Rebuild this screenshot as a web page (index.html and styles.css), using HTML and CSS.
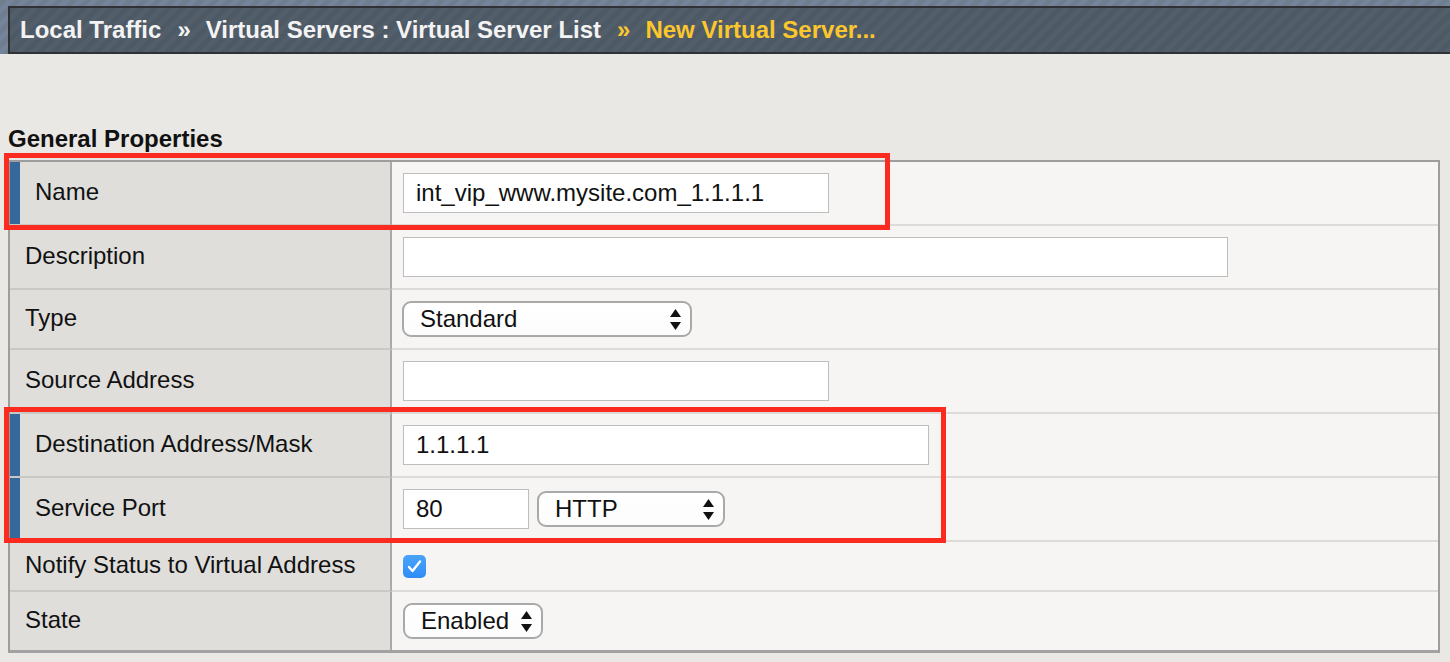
FILE: index.html
```html
<!DOCTYPE html>
<html lang="en">
<head>
<meta charset="utf-8">
<title>New Virtual Server</title>
<link rel="stylesheet" href="styles.css">
</head>
<body>
<header class="topbar">
  <div class="crumbs">
    <span class="crumb">Local Traffic</span><span class="sep">»</span><span class="crumb">Virtual Servers : Virtual Server List</span><span class="sep current">»</span><span class="crumb current">New Virtual Server...</span>
  </div>
</header>
<main class="content">
  <h2 class="section-title">General Properties</h2>
  <div class="props">
    <div class="row req">
      <div class="label">Name</div>
      <div class="value"><div class="input w-name">int_vip_www.mysite.com_1.1.1.1</div></div>
    </div>
    <div class="row">
      <div class="label">Description</div>
      <div class="value"><div class="input w-desc"></div></div>
    </div>
    <div class="row">
      <div class="label">Type</div>
      <div class="value">
        <div class="select w-type"><span>Standard</span><svg class="arrows" width="11" height="21" viewBox="0 0 11 21"><path d="M5.5 0 L11 8 L0 8 Z M0 13 L11 13 L5.5 21 Z"/></svg></div>
      </div>
    </div>
    <div class="row">
      <div class="label">Source Address</div>
      <div class="value"><div class="input w-name"></div></div>
    </div>
    <div class="row req">
      <div class="label">Destination Address/Mask</div>
      <div class="value"><div class="input w-dest">1.1.1.1</div></div>
    </div>
    <div class="row req">
      <div class="label">Service Port</div>
      <div class="value">
        <div class="input w-port">80</div>
        <div class="select w-http"><span>HTTP</span><svg class="arrows" width="11" height="21" viewBox="0 0 11 21"><path d="M5.5 0 L11 8 L0 8 Z M0 13 L11 13 L5.5 21 Z"/></svg></div>
      </div>
    </div>
    <div class="row">
      <div class="label">Notify Status to Virtual Address</div>
      <div class="value">
        <span class="checkbox"><svg width="23" height="23" viewBox="0 0 23 23"><path d="M6 12 L9.5 16 L17 6.5" fill="none" stroke="#fff" stroke-width="2.4" stroke-linecap="round" stroke-linejoin="round"/></svg></span>
      </div>
    </div>
    <div class="row">
      <div class="label">State</div>
      <div class="value">
        <div class="select w-state"><span>Enabled</span><svg class="arrows" width="11" height="21" viewBox="0 0 11 21"><path d="M5.5 0 L11 8 L0 8 Z M0 13 L11 13 L5.5 21 Z"/></svg></div>
      </div>
    </div>
  </div>
</main>
<div class="annot annot-name"></div>
<div class="annot annot-dest"></div>
</body>
</html>
```

FILE: styles.css
```css
html, body {
  margin: 0;
  padding: 0;
}

body {
  position: relative;
  min-height: 662px;
  background: #e9e8e4;
  font-family: "Liberation Sans", Arial, Helvetica, sans-serif;
  color: #111;
  overflow: hidden;
}

.topbar {
  padding: 6px 0 0 8px;
  background: repeating-linear-gradient(135deg, #6e7e8f 0 5px, #74849a 5px 10px);
}

.crumbs {
  border: 2px solid #2f3135;
  border-right: 0;
  height: 44px;
  box-sizing: content-box;
  padding: 0 0 0 10px;
  line-height: 43px;
  font-size: 24px;
  font-weight: bold;
  color: #f3f3f3;
  white-space: nowrap;
  background: repeating-linear-gradient(135deg, #4e5966 0 5px, #535e6b 5px 10px);
}

.sep {
  padding: 0 15px 0 16px;
}

.current {
  color: #fcc72c;
}

.content {
  padding: 0 10px 0 8px;
}

.section-title {
  margin: 71px 0 7px;
  font-size: 24px;
  line-height: 28px;
  font-weight: bold;
  color: #111;
}

.props {
  border: 2px solid #9d9d9d;
  border-bottom: 3px solid #a2a2a2;
}

.row {
  display: flex;
}

.label {
  flex: 0 0 382px;
  box-sizing: border-box;
  display: flex;
  align-items: center;
  padding: 10px 0 12px 15px;
  font-size: 24px;
  line-height: 26px;
  background: #dfdedb;
  border-right: 2px solid #a9a9a9;
  border-bottom: 2px solid #c9c8c5;
  white-space: nowrap;
}

.req .label {
  padding-left: 25px;
  box-shadow: inset 10px 0 0 #35699b;
}

.value {
  flex: 1;
  display: flex;
  align-items: center;
  gap: 8px;
  padding: 11px;
  background: #f6f5f3;
  border-bottom: 2px solid #dcdbd8;
}

.row:last-child .label,
.row:last-child .value {
  border-bottom: 0;
}

.input {
  box-sizing: border-box;
  height: 40px;
  padding: 0 12px;
  background: #fff;
  border: 1px solid #bdbdbd;
  font-size: 24px;
  line-height: 38px;
  color: #111;
  white-space: nowrap;
}

.w-name { width: 426px; }
.w-desc { width: 825px; }
.w-dest { width: 526px; }
.w-port { width: 126px; }

.select {
  box-sizing: border-box;
  height: 36px;
  display: flex;
  align-items: center;
  justify-content: space-between;
  padding: 0 9px 0 16px;
  background: linear-gradient(#ffffff, #fcfcfc);
  border: 2px solid #a9a9a9;
  border-radius: 9px;
  font-size: 24px;
  line-height: 32px;
  color: #111;
  white-space: nowrap;
}

.w-type { width: 290px; margin-left: -1px; }
.w-http { width: 188px; }
.w-state { width: 140px; }

.arrows {
  display: block;
  flex: 0 0 auto;
  fill: #111;
}

.checkbox {
  display: block;
  width: 23px;
  height: 23px;
  border-radius: 5px;
  background: linear-gradient(#4aa3fb, #2f8df5);
}

.checkbox svg {
  display: block;
}

.annot {
  position: absolute;
  box-sizing: border-box;
  border: 5px solid #fb2c1f;
  pointer-events: none;
}

.annot-name {
  left: 4px;
  top: 153px;
  width: 886px;
  height: 77px;
}

.annot-dest {
  left: 4px;
  top: 407px;
  width: 942px;
  height: 136px;
}
```
